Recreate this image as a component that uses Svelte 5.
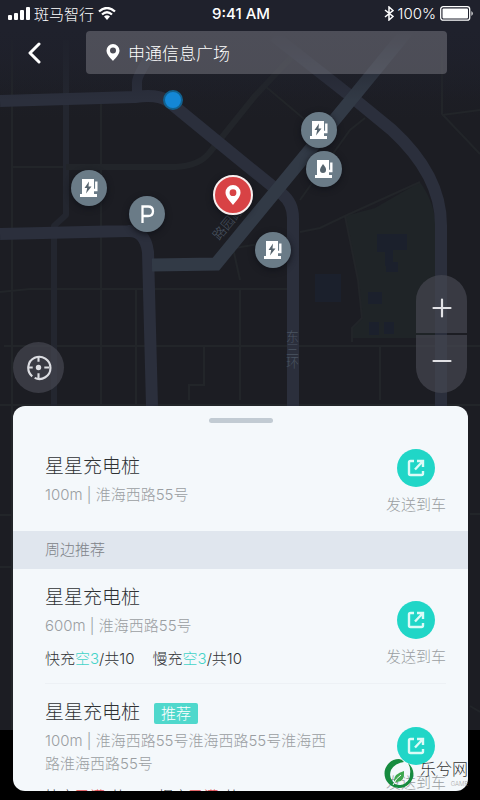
<script>
	let query = $state('申通信息广场');
	let selected = $state(null);

	const pins = [
		{ type: 'charge', x: 89, y: 188, label: '充电桩' },
		{ type: 'parking', x: 147, y: 214, label: '停车场' },
		{ type: 'charge', x: 319, y: 130, label: '充电桩' },
		{ type: 'fuel', x: 324, y: 169, label: '加油站' },
		{ type: 'charge', x: 273, y: 250, label: '充电桩' },
		{ type: 'current', x: 233, y: 195, label: '当前地点' }
	];

	const nearby = [
		{
			id: 1,
			name: '星星充电桩',
			distance: '600m',
			address: '淮海西路55号',
			fast: 3,
			slow: 3,
			recommended: false
		},
		{
			id: 2,
			name: '星星充电桩',
			distance: '100m',
			address: '淮海西路55号淮海西路55号淮海西路淮海西路55号',
			fast: 0,
			slow: 0,
			recommended: true
		}
	];
</script>

{#snippet sendButton(id)}
	<button class="send" onclick={() => (selected = id)}>
		<span class="send-icon">
			<svg width="18" height="18" viewBox="0 0 18 18" fill="none" stroke="#dcfbf7" stroke-width="2.400">
				<path d="M7 2H3.500Q2 2 2 3.500V14.500Q2 16 3.500 16H14.500Q16 16 16 14.500V12" />
				<path d="M10 2H16V8M16 2L8 10.500" />
			</svg>
		</span>
		发送到车
	</button>
{/snippet}

{#snippet slots(label, free)}
	<span>{label}<b class:full={free === 0}>{free === 0 ? '已满' : '空' + free}</b>/共10</span>
{/snippet}

<div class="screen">
	<div class="map">
		<svg class="roads" width="480" height="730" viewBox="0 0 480 730" fill="none">
			<defs>
				<linearGradient id="fade" x1="0" y1="0" x2="0" y2="1">
					<stop offset="0.300" stop-color="#1f212c" />
					<stop offset="1" stop-color="#1f212c" stop-opacity="0" />
				</linearGradient>
			</defs>
			<path fill="#1f2427" d="M375 208L420 182Q436 205 436 230V338H352V328L362 318L358 280L345 216Z" />
			<g fill="#1b202c">
				<path d="M377 234h30v16h-14v16h-8v-14h-8zM315 274h26v28h-26zM368 292h14v12h-14zM369 322h10v13h-10zM384 322h10v12h-10zM386 262h12v10h-12z" />
			</g>
			<g stroke="#222529" stroke-width="2">
				<path d="M12 40V730M101 100V406M136 290V406M240 290V400M380 346V400M4 346H480M0 405H480" />
				<path d="M0 292L30 289H288M12 167H66M300 232L320 228L345 216L420 182M345 216L358 280L362 318L352 328V342" />
				<path d="M442 40V114L480 154M204 346V385H189V400M265 86L310 124M235 248L295 238M233 248L240 280M0 515H14M0 567H14" />
				<path d="M300 200L350 130L365 118M442 115L480 110M470 514H480M470 706L480 712" />
			</g>
			<g stroke="#23262f" stroke-width="6" stroke-linejoin="round">
				<path d="M66 40V215L54 226V406" />
				<path stroke="#22252a" d="M66 167H175Q200 166 210 152L255 96L300 48" />
			</g>
			<g stroke="#2b2f3c" stroke-width="12" stroke-linejoin="round">
				<path d="M0 101L135 97Q158 94 168 101L240 160L282 194Q293 203 293 218V406" />
				<path d="M274 36L353 98L392 130Q441 175 441 225V406" />
				<path d="M0 234L128 231Q145 230 148 252L152 406" />
				<path d="M137 94V82Q137 76 150 56" stroke-width="10" />
			</g>
			<path stroke="#323a46" stroke-width="13" d="M408 30L350 101L216 264L152 265" />
			<rect width="480" height="100" fill="url(#fade)" />
			<g class="road-name">
				<text x="286" y="341">东</text>
				<text x="286" y="354">三</text>
				<text x="286" y="367">环</text>
				<text transform="translate(219 241) rotate(-50)">路园路</text>
			</g>
		</svg>
		<span class="here"></span>
		{#each pins as pin}
			<button
				class="pin {pin.type}"
				style="left: {pin.x}px; top: {pin.y}px"
				aria-label={pin.label}
			>
				{#if pin.type === 'parking'}
					<svg width="20" height="20" viewBox="0 0 20 20" fill="none" stroke="#fff" stroke-width="2.300">
						<path d="M5.500 19V2.500H11Q16 2.500 16 7.200T11 12H6" />
					</svg>
				{:else if pin.type === 'current'}
					<svg width="16" height="20" viewBox="0 0 16 20">
						<path fill="#fff" fill-rule="evenodd" d="M8 0A7.500 7.500 0 0 1 15.500 7.500C15.500 12 11 16 8 20C5 16 .5 12 .5 7.500A7.500 7.500 0 0 1 8 0M8 4.300A3.400 3.400 0 1 0 8 11.100A3.400 3.400 0 1 0 8 4.300" />
					</svg>
				{:else}
					<svg width="18" height="18" viewBox="0 0 18 18">
						<path fill="#fff" d="M2 0H14V15H17V18H0V15H2Z" />
						<path fill="none" stroke="#fff" stroke-width="2.400" d="M16.300 2.500V11H13" />
						{#if pin.type === 'charge'}
							<path fill="#56646e" d="M9 2.500L4.500 9H7.200L6 14.500L11.500 7.500H8.500Z" />
						{:else}
							<path fill="#56646e" d="M8 4Q11.500 8 11 10A3 3 0 0 1 5 10Q5 8 8 4" />
						{/if}
					</svg>
				{/if}
			</button>
		{/each}
	</div>

	<header>
		<div class="status">
			<div class="status-side">
				<svg width="22" height="14" viewBox="0 0 22 14" fill="#fff">
					<rect x="0" y="9" width="4" height="5" rx="1" />
					<rect x="6" y="7" width="4" height="7" rx="1" />
					<rect x="12" y="4" width="4" height="10" rx="1" />
					<rect x="18" y="1" width="4" height="13" rx="1" />
				</svg>
				<span>斑马智行</span>
				<svg width="18" height="13" viewBox="0 0 18 13" fill="none" stroke="#fff" stroke-width="2.300">
					<path d="M1 4.500Q9 -2.500 17 4.500M4 7.500Q9 3 14 7.500" />
					<path fill="#fff" stroke="none" d="M6 9.500Q9 7 12 9.500L9 13Z" />
				</svg>
			</div>
			<time>9:41 AM</time>
			<div class="status-side end">
				<svg width="10" height="15" viewBox="0 0 10 15" fill="none" stroke="#fff" stroke-width="1.500">
					<path d="M1 4L9 10.500L5 14V1L9 4.500L1 11" />
				</svg>
				<span>100%</span>
				<svg width="34" height="15" viewBox="0 0 34 15">
					<rect x=".7" y=".7" width="29" height="13.500" rx="2.500" fill="none" stroke="#fff" stroke-width="1.300" />
					<rect x="2.500" y="2.500" width="25.500" height="10" rx="1" fill="#fff" />
					<path fill="#fff" d="M31.500 5Q34 7.500 31.500 10Z" />
				</svg>
			</div>
		</div>
		<div class="search-row">
			<button class="back" aria-label="返回">
				<svg width="14" height="22" viewBox="0 0 14 22" fill="none" stroke="#fff" stroke-width="3" stroke-linecap="round" stroke-linejoin="round">
					<path d="M12 2L3 11L12 20" />
				</svg>
			</button>
			<label class="search">
				<svg width="14" height="17" viewBox="0 0 14 17">
					<path fill="#fff" fill-rule="evenodd" d="M7 0A6.500 6.500 0 0 1 13.500 6.500C13.500 10.500 9.500 14 7 17C4.500 14 .5 10.500 .5 6.500A6.500 6.500 0 0 1 7 0M7 3.500A3 3 0 1 0 7 9.500A3 3 0 1 0 7 3.500" />
				</svg>
				<input type="text" aria-label="搜索地点" bind:value={query} />
			</label>
		</div>
	</header>

	<div class="controls">
		<button class="locate" aria-label="定位">
			<svg width="27" height="27" viewBox="0 0 28 28" fill="none" stroke="#dcdde2" stroke-width="2.200">
				<path d="M7.500 23.200A11.500 11.500 0 1 1 10 24.800" />
				<path d="M14 3V8M14 20V25M3 14H8M20 14H25" />
				<circle cx="14" cy="14" r="2.800" fill="#dcdde2" stroke="none" />
			</svg>
		</button>
		<div class="zoom">
			<button aria-label="放大">
				<svg width="20" height="20" viewBox="0 0 20 20" stroke="#e2e2e6" stroke-width="2.200" stroke-linecap="round">
					<path d="M1.500 10H18.500M10 1.500V18.500" />
				</svg>
			</button>
			<button aria-label="缩小">
				<svg width="20" height="20" viewBox="0 0 20 20" stroke="#e2e2e6" stroke-width="2.200" stroke-linecap="round">
					<path d="M1.500 10H18.500" />
				</svg>
			</button>
		</div>
	</div>

	<main class="sheet">
		<div class="handle"></div>
		<section class="station main-station">
			<div class="info">
				<h2>星星充电桩</h2>
				<p class="address">100m | 淮海西路55号</p>
			</div>
			{@render sendButton(0)}
		</section>
		<h3>周边推荐</h3>
		{#each nearby as station (station.id)}
			<section class="station">
				<div class="info">
					<h2>
						{station.name}
						{#if station.recommended}<span class="tag">推荐</span>{/if}
					</h2>
					<p class="address">{station.distance} | {station.address}</p>
					<p class="slots">
						{@render slots('快充', station.fast)}
						{@render slots('慢充', station.slow)}
					</p>
				</div>
				{@render sendButton(station.id)}
			</section>
		{/each}
	</main>

	<div class="watermark">
		<svg width="30" height="30" viewBox="0 0 30 30">
			<path fill="#168b3f" fill-rule="evenodd" d="M15 0A14.500 14.500 0 1 0 29.500 15Q29 8 24 4Q27 9 26 15A10.500 10.500 0 0 1 11 25Q4 19 7 11Q11 4 20 3Q18 0 15 0" />
			<path fill="#3fa84e" d="M20 12Q21 23 13 23Q10 23 10 21Q10 15 20 12" />
			<path fill="none" stroke="#f4f8fb" d="M9 26Q12 19 17 16" />
		</svg>
		<div class="watermark-name">乐兮网<small>GAME</small></div>
	</div>
</div>

<style>
	:global(body) {
		background: #000;
	}
	.screen {
		position: relative;
		display: flex;
		flex-direction: column;
		height: 100vh;
		overflow: hidden;
		font-family: Inter, "Noto Sans CJK SC", sans-serif;
		font-weight: 300;
		color: #fff;
	}
	button {
		padding: 0;
		border: 0;
		background: none;
		font: inherit;
		color: inherit;
		cursor: pointer;
	}
	svg {
		display: block;
		flex: none;
	}
	h2,
	h3,
	p {
		margin: 0;
		font-weight: 300;
	}

	/* map */
	.map {
		position: absolute;
		inset: 0 0 70px;
		background: linear-gradient(#1f212c, #1c1d23 120px);
	}
	.road-name {
		font-size: 13px;
		fill: #4a5462;
	}
	.pin,
	.here {
		position: absolute;
		display: grid;
		place-items: center;
		box-sizing: border-box;
		border-radius: 50%;
		transform: translate(-50%, -50%);
	}
	.pin {
		width: 36px;
		height: 36px;
		background: #6a7b87;
		box-shadow: 0 2px 6px #11131a;
	}
	.pin.current {
		width: 40px;
		height: 40px;
		border: 2px solid #f8eeee;
		background: #d84245;
	}
	.here {
		left: 173px;
		top: 100px;
		width: 20px;
		height: 20px;
		border: 2px solid #12618f;
		background: #1487d6;
	}

	/* top bar */
	header {
		position: relative;
	}
	.status {
		display: grid;
		grid-template-columns: 1fr auto 1fr;
		align-items: center;
		height: 26px;
		padding: 0 6px 0 8px;
		font-size: 15px;
	}
	.status time {
		font-weight: 500;
	}
	.status-side {
		display: flex;
		align-items: center;
		gap: 4px;
	}
	.status-side.end {
		justify-content: flex-end;
	}
	.search-row {
		display: flex;
		align-items: center;
		padding: 5px 33px 0 25px;
	}
	.back {
		display: flex;
		width: 61px;
		padding-left: 2px;
	}
	.search {
		flex: 1;
		display: flex;
		align-items: center;
		gap: 8px;
		height: 43px;
		padding: 0 20px;
		border-radius: 4px;
		background: rgba(132, 134, 142, 0.45);
	}
	.search input {
		flex: 1;
		min-width: 0;
		padding: 0;
		border: 0;
		outline: 0;
		background: none;
		font: inherit;
		font-size: 17px;
		color: #fff;
	}

	/* floating controls */
	.controls {
		position: relative;
		flex: 1;
		display: flex;
		align-items: flex-end;
		justify-content: space-between;
		padding: 0 13px;
		pointer-events: none;
	}
	.controls button {
		display: grid;
		place-items: center;
		width: 51px;
		background: rgba(70, 71, 81, 0.7);
		pointer-events: auto;
	}
	.locate {
		height: 51px;
		border-radius: 50%;
	}
	.zoom {
		display: grid;
		gap: 2px;
		overflow: hidden;
		border-radius: 26px;
	}
	.zoom button {
		height: 58px;
	}
	.zoom button:first-child {
		padding-top: 8px;
	}
	.zoom button:last-child {
		padding-bottom: 6px;
	}

	/* bottom sheet */
	.sheet {
		position: relative;
		box-sizing: border-box;
		height: 385px;
		margin: 13px 12px 9px 13px;
		overflow: hidden;
		border-radius: 12px;
		background: #f4f8fb;
		color: #2e3134;
	}
	.handle {
		width: 64px;
		height: 5px;
		margin: 12px auto 0;
		border-radius: 3px;
		background: #c2cbd3;
	}
	.station {
		display: flex;
		align-items: center;
		justify-content: space-between;
		margin: 0 22px 0 32px;
		padding: 13px 0 11px;
	}
	.station + .station {
		border-top: 1px solid #edf1f5;
	}
	.main-station {
		height: 82px;
		padding: 14px 0 12px;
	}
	.info {
		width: 290px;
	}
	h2 {
		display: flex;
		align-items: center;
		gap: 14px;
		font-size: 19px;
		line-height: 32px;
	}
	h3 {
		padding: 0 32px;
		background: #e0e6ee;
		font-size: 15px;
		line-height: 38px;
		color: #7d8288;
	}
	.tag {
		padding: 0 7px;
		border-radius: 2px;
		background: #4fd8cc;
		font-size: 15px;
		line-height: 21px;
		color: #fff;
	}
	.address {
		font-size: 15px;
		line-height: 23px;
		color: #9a9ea2;
	}
	.slots {
		display: flex;
		gap: 18px;
		margin-top: 9px;
		font-size: 15px;
		line-height: 26px;
	}
	.slots b {
		font-weight: 300;
		color: #43d3c8;
	}
	.slots b.full {
		color: #e0474c;
	}
	.send {
		display: flex;
		flex-direction: column;
		align-items: center;
		gap: 7px;
		margin-top: 14px;
		font-size: 15px;
		line-height: 22px;
		color: #9a9ea2;
	}
	.main-station .send {
		margin-top: 8px;
	}
	.send-icon {
		display: grid;
		place-items: center;
		width: 38px;
		height: 38px;
		border-radius: 50%;
		background: #20d6c7;
	}

	.watermark {
		position: absolute;
		right: 12px;
		bottom: 11px;
		display: flex;
		gap: 6px;
		color: #333;
	}
	.watermark-name {
		display: grid;
		font-size: 16px;
		line-height: 20px;
	}
	.watermark small {
		font-size: 6px;
		line-height: 6px;
		text-align: right;
		color: #aaa;
	}
</style>
